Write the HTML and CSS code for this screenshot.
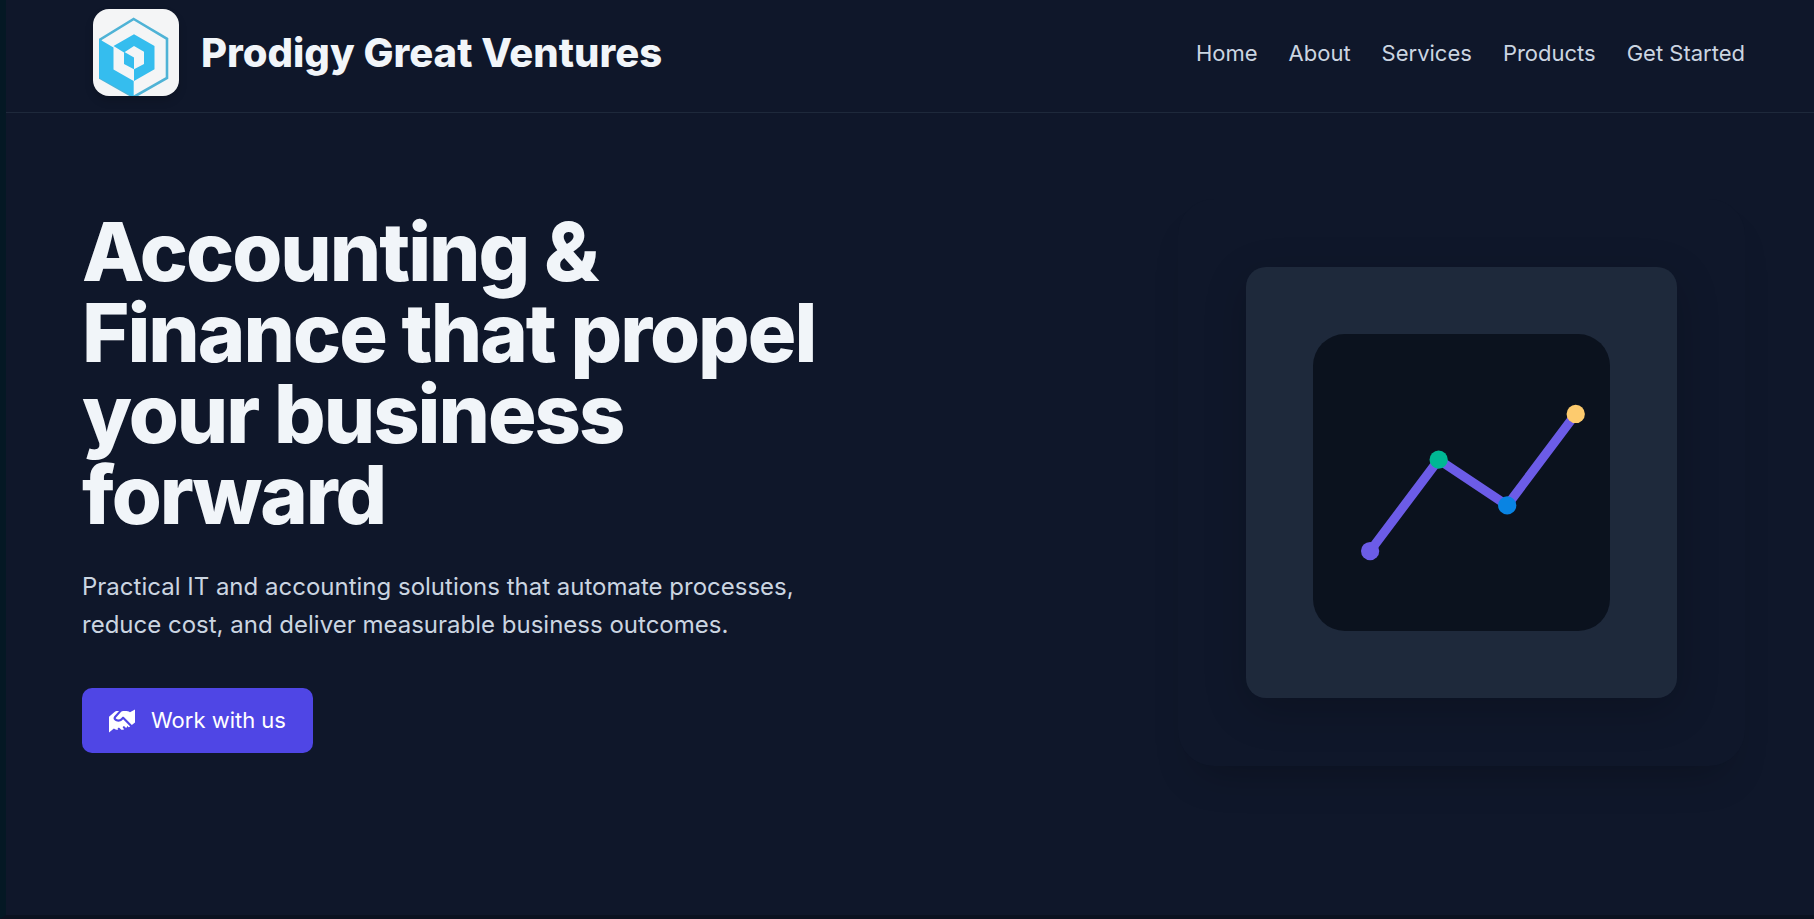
FILE: index.html
```html
<!DOCTYPE html>
<html lang="en">
<head>
<meta charset="utf-8">
<meta name="viewport" content="width=device-width, initial-scale=1">
<title>Prodigy Great Ventures</title>
<link rel="stylesheet" href="styles.css">
</head>
<body>
<div class="page">
  <header class="site-header">
    <a class="brand" href="#home">
      <svg class="brand-logo" viewBox="0 0 86 87" aria-hidden="true">
        <rect width="86" height="87" fill="#f4f5f6"/>
        <path d="M40.7 10L74 29.8V69L40.7 88L7.3 69V30.5Z" fill="none" stroke="#4fb3d6" stroke-width="2.6"/>
        <path d="M6 30L20.5 38.5V60.5L40.7 72V88L6 69Z" fill="#35bdee"/>
        <path d="M20.5 37L41 25.3L61.5 37V60.3L41 72V60.3L51 55V42.7L41 37L31 43.5Z" fill="#35bdee"/>
        <path d="M31 42.7L41 48.5V60.3L31 55Z" fill="#35bdee"/>
      </svg>
      <span class="brand-name">Prodigy Great Ventures</span>
    </a>
    <nav class="site-nav" aria-label="Main">
      <a href="#home">Home</a>
      <a href="#about">About</a>
      <a href="#services">Services</a>
      <a href="#products">Products</a>
      <a href="#start">Get Started</a>
    </nav>
  </header>
  <main class="hero">
    <div class="hero-copy">
      <h1 class="hero-title">Accounting &amp; Finance that propel your business forward</h1>
      <p class="hero-text">Practical IT and accounting solutions that automate processes, reduce cost, and deliver measurable business outcomes.</p>
      <a class="cta" href="#contact">
        <svg class="cta-icon" viewBox="0 0 576 576" aria-hidden="true">
          <path fill="currentColor" d="M268.9 85.2L152.3 214.8c-4.6 5.1-4.4 13 .5 17.9 30.5 30.5 80 30.5 110.5 0l31.8-31.8c4.2-4.2 9.5-6.5 14.9-6.9 6.8-.6 13.8 1.7 19 6.9L505.6 376 576 320V32L464 96 440.2 80.1C424.4 69.6 405.9 64 386.9 64h-70.4c-1.1 0-2.3 0-3.4.1-16.9.9-32.8 8.5-44.2 21.1zM116.6 182.7L223.4 64h-39.6c-25.5 0-49.9 10.1-67.9 28.1L0 192v352l108.4-90.3c23 19.2 52 29.7 81.9 29.7h15.7l-7-7c-9.4-9.4-9.4-24.6 0-33.9s24.6-9.4 33.9 0l41 41h9c19.1 0 37.8-4.3 54.8-12.3L311 444.5c-9.4-9.4-9.4-24.6 0-33.9s24.6-9.4 33.9 0l32 32 17.5-17.5c8.9-8.9 11.5-21.8 7.6-33.1l32 32L471 410 312.5 251.6l-15.3 15.1c-49.3 49.3-129.1 49.3-178.4 0-23-23-23.9-59.9-2.2-84z"/>
        </svg>
        <span>Work with us</span>
      </a>
    </div>
    <div class="hero-visual">
      <div class="visual-card">
        <svg class="chart" viewBox="0 0 130 130" role="img" aria-label="Rising trend chart">
          <rect width="130" height="130" rx="14" fill="#0b121e"/>
          <polyline points="25,95 55,55 85,75 115,35" fill="none" stroke="#6c5ce7" stroke-width="4"/>
          <circle cx="25" cy="95" r="4" fill="#6c5ce7"/>
          <circle cx="55" cy="55" r="4" fill="#00b894"/>
          <circle cx="85" cy="75" r="4" fill="#0984e3"/>
          <circle cx="115" cy="35" r="4" fill="#fdcb6e"/>
        </svg>
      </div>
    </div>
  </main>
</div>
</body>
</html>
```
FILE: styles.css
```css
* { box-sizing: border-box; }

body {
  margin: 0;
  background: #0f172a;
  color: #f1f5f9;
  font-family: Inter, "Liberation Sans", sans-serif;
}

a { color: inherit; text-decoration: none; }

.page {
  min-height: 100vh;
  border-left: 6px solid #041824;
  border-bottom: 4px solid #0b1220;
}

.site-header {
  display: flex;
  align-items: center;
  justify-content: space-between;
  padding: 9px 69px 16px 87px;
  border-bottom: 1px solid #1e293b;
}

.brand {
  display: flex;
  align-items: center;
  gap: 22px;
}

.brand-logo {
  width: 86px;
  height: 87px;
  border-radius: 16px;
  box-shadow: 0 5px 8px rgba(0, 0, 0, 0.15);
}

.brand-name {
  font-size: 40px;
  font-weight: 800;
  line-height: 44px;
}

.site-nav {
  display: flex;
  gap: 31px;
  font-size: 22px;
  line-height: 32px;
  color: #cbd5e1;
}

.hero {
  display: flex;
  align-items: center;
  justify-content: space-between;
  gap: 32px;
  padding: 86px 69px 87px 76px;
}

.hero-copy {
  flex: 0 1 768px;
}

.hero-title {
  margin: 0 0 32px;
  font-size: 81px;
  font-weight: 800;
  line-height: 81px;
  letter-spacing: -2px;
}

.hero-text {
  margin: 0 0 44px;
  font-size: 24px;
  line-height: 38px;
  color: #cbd5e1;
}

.cta {
  display: flex;
  align-items: center;
  gap: 16px;
  width: fit-content;
  padding: 16px 27px;
  border-radius: 10px;
  background: #4f46e5;
  color: #fff;
  font-size: 22px;
  line-height: 33px;
}

.cta-icon {
  width: 26px;
  height: 26px;
}

.hero-visual {
  padding: 68px;
  border-radius: 36px;
  background: #0f172a;
  box-shadow: 0 25px 40px -20px rgba(0, 0, 0, 0.25);
}

.visual-card {
  padding: 67px;
  border-radius: 20px;
  background: #1e293b;
  box-shadow: 0 12px 44px rgba(0, 0, 0, 0.2);
}

.chart {
  display: block;
  width: 297px;
  height: 297px;
}
```
